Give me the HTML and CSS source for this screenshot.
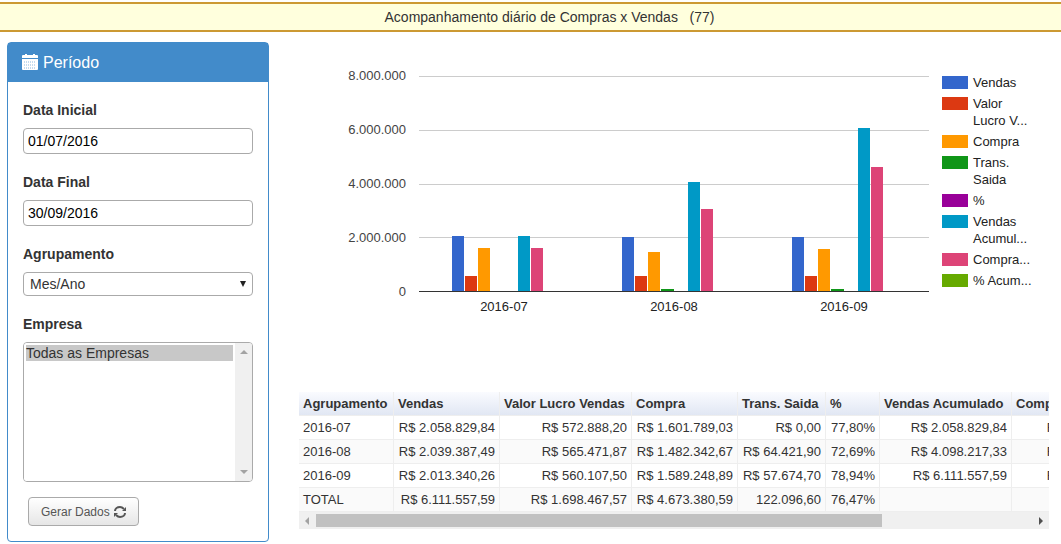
FILE: index.html
```html
<!DOCTYPE html>
<html lang="pt-br">
<head>
    <meta charset="UTF-8">
    <meta name="viewport" content="width=device-width, initial-scale=1.0">
    <title>Acompanhamento diário de Compras x Vendas</title>
    <link rel="stylesheet" href="styles.css">
</head>
<body>

<header class="titulo">Acompanhamento diário de Compras x Vendas &nbsp; (77)</header>

<div class="pagina">
    <form class="painel">
        <h3 class="painel-titulo">
            <svg class="icone-calendario" viewBox="0 0 16 16" width="16" height="16" fill="#fff">
                <path d="M3 0h2v1h6V0h2v1h2a1 1 0 0 1 1 1v2H0V2a1 1 0 0 1 1-1h2z"/>
                <path d="M0 5h16v10a1 1 0 0 1-1 1H1a1 1 0 0 1-1-1z"/>
                <path d="M2 8h12M2 11h12M2 14h12" fill="none" stroke="#8ab8e0" stroke-width="1" stroke-dasharray="1 1"/>
            </svg>
            Período
        </h3>
        <div class="painel-corpo">
            <div class="campo">
                <label for="dataInicial">Data Inicial</label>
                <input type="text" id="dataInicial" value="01/07/2016">
            </div>
            <div class="campo">
                <label for="dataFinal">Data Final</label>
                <input type="text" id="dataFinal" value="30/09/2016">
            </div>
            <div class="campo">
                <label for="agrupamento">Agrupamento</label>
                <div class="combo">
                    <select id="agrupamento">
                        <option selected>Mes/Ano</option>
                    </select>
                    <svg viewBox="0 0 6 6" width="6" height="6" fill="#222"><path d="M0 0h6L3 6z"/></svg>
                </div>
            </div>
            <div class="campo">
                <label for="empresa">Empresa</label>
                <div class="lista">
                    <select id="empresa" size="8" multiple>
                        <option selected>Todas as Empresas</option>
                    </select>
                    <div class="rolagem-v">
                        <svg viewBox="0 0 8 4" width="8" height="4" fill="#a3a3a3"><path d="M0 4h8L4 0z"/></svg>
                        <svg viewBox="0 0 8 4" width="8" height="4" fill="#a3a3a3"><path d="M0 0h8L4 4z"/></svg>
                    </div>
                </div>
            </div>
            <button type="button" class="btn">Gerar Dados
                <svg viewBox="0 0 12 12" width="12" height="12" fill="none" stroke="#555" stroke-width="2">
                    <path d="M1 5C1 3 3 1 6 1c2 0 3 1 4 2M11 7c0 2-2 4-5 4-2 0-3-1-4-2"/>
                    <path d="M12 1v4H8zM0 11V7h4z" fill="#555" stroke="none"/>
                </svg>
            </button>
        </div>
    </form>

    <main class="conteudo">
        <section class="grafico">
            <div class="eixo-y">
                <span>8.000.000</span>
                <span>6.000.000</span>
                <span>4.000.000</span>
                <span>2.000.000</span>
                <span>0</span>
            </div>
            <div class="area">
                <div class="linhas"><i></i><i></i><i></i><i></i><i></i></div>
                <div class="barras">
                    <div class="grupo">
                        <div class="barra vendas" style="height: 25.74%"></div>
                        <div class="barra lucro" style="height: 7.16%"></div>
                        <div class="barra compra" style="height: 20.02%"></div>
                        <div class="barra trans" style="height: 0%"></div>
                        <div class="barra perc" style="height: 0%"></div>
                        <div class="barra vendas-ac" style="height: 25.74%"></div>
                        <div class="barra compra-ac" style="height: 20.02%"></div>
                        <div class="barra perc-ac" style="height: 0%"></div>
                    </div>
                    <div class="grupo">
                        <div class="barra vendas" style="height: 25.49%"></div>
                        <div class="barra lucro" style="height: 7.07%"></div>
                        <div class="barra compra" style="height: 18.53%"></div>
                        <div class="barra trans" style="height: 0.81%"></div>
                        <div class="barra perc" style="height: 0%"></div>
                        <div class="barra vendas-ac" style="height: 51.23%"></div>
                        <div class="barra compra-ac" style="height: 38.55%"></div>
                        <div class="barra perc-ac" style="height: 0%"></div>
                    </div>
                    <div class="grupo">
                        <div class="barra vendas" style="height: 25.17%"></div>
                        <div class="barra lucro" style="height: 7%"></div>
                        <div class="barra compra" style="height: 19.87%"></div>
                        <div class="barra trans" style="height: 0.72%"></div>
                        <div class="barra perc" style="height: 0%"></div>
                        <div class="barra vendas-ac" style="height: 76.39%"></div>
                        <div class="barra compra-ac" style="height: 58.42%"></div>
                        <div class="barra perc-ac" style="height: 0%"></div>
                    </div>
                </div>
            </div>
            <ul class="legenda">
                <li><i class="vendas"></i><span>Vendas</span></li>
                <li><i class="lucro"></i><span>Valor<br>Lucro V...</span></li>
                <li><i class="compra"></i><span>Compra</span></li>
                <li><i class="trans"></i><span>Trans.<br>Saida</span></li>
                <li><i class="perc"></i><span>%</span></li>
                <li><i class="vendas-ac"></i><span>Vendas<br>Acumul...</span></li>
                <li><i class="compra-ac"></i><span>Compra...</span></li>
                <li><i class="perc-ac"></i><span>% Acum...</span></li>
            </ul>
            <div class="eixo-x">
                <span>2016-07</span>
                <span>2016-08</span>
                <span>2016-09</span>
            </div>
        </section>

        <section class="dados">
            <div class="tabela-janela">
                <table>
                    <colgroup>
                        <col class="c-agrupamento">
                        <col class="c-valor">
                        <col class="c-largo">
                        <col class="c-valor">
                        <col class="c-trans">
                        <col class="c-perc">
                        <col class="c-largo">
                        <col class="c-compra-ac">
                        <col class="c-perc-ac">
                    </colgroup>
                    <thead>
                        <tr>
                            <th>Agrupamento</th>
                            <th>Vendas</th>
                            <th>Valor Lucro Vendas</th>
                            <th>Compra</th>
                            <th>Trans. Saida</th>
                            <th>%</th>
                            <th>Vendas Acumulado</th>
                            <th>Compra Acumulado</th>
                            <th>% Acumulado</th>
                        </tr>
                    </thead>
                    <tbody>
                        <tr>
                            <td>2016-07</td>
                            <td>R$ 2.058.829,84</td>
                            <td>R$ 572.888,20</td>
                            <td>R$ 1.601.789,03</td>
                            <td>R$ 0,00</td>
                            <td>77,80%</td>
                            <td>R$ 2.058.829,84</td>
                            <td>R$ 1.601.789,03</td>
                            <td>77,80%</td>
                        </tr>
                        <tr>
                            <td>2016-08</td>
                            <td>R$ 2.039.387,49</td>
                            <td>R$ 565.471,87</td>
                            <td>R$ 1.482.342,67</td>
                            <td>R$ 64.421,90</td>
                            <td>72,69%</td>
                            <td>R$ 4.098.217,33</td>
                            <td>R$ 3.084.131,70</td>
                            <td>75,25%</td>
                        </tr>
                        <tr>
                            <td>2016-09</td>
                            <td>R$ 2.013.340,26</td>
                            <td>R$ 560.107,50</td>
                            <td>R$ 1.589.248,89</td>
                            <td>R$ 57.674,70</td>
                            <td>78,94%</td>
                            <td>R$ 6.111.557,59</td>
                            <td>R$ 4.673.380,59</td>
                            <td>76,47%</td>
                        </tr>
                        <tr>
                            <td>TOTAL</td>
                            <td>R$ 6.111.557,59</td>
                            <td>R$ 1.698.467,57</td>
                            <td>R$ 4.673.380,59</td>
                            <td>122.096,60</td>
                            <td>76,47%</td>
                            <td></td>
                            <td></td>
                            <td></td>
                        </tr>
                    </tbody>
                </table>
            </div>
            <div class="rolagem-h">
                <svg viewBox="0 0 4 8" width="4" height="8" fill="#a3a3a3"><path d="M4 0v8L0 4z"/></svg>
                <div class="trilho"><div class="polegar"></div></div>
                <svg viewBox="0 0 4 8" width="4" height="8" fill="#505050"><path d="M0 0v8l4-4z"/></svg>
            </div>
        </section>
    </main>
</div>

</body>
</html>
```
FILE: styles.css
```css
* {
    box-sizing: border-box;
}
body {
    margin: 0;
    font-family: "Liberation Sans", Arial, sans-serif;
    font-size: 14px;
    line-height: 20px;
    color: #333;
    background: #fff;
}
.titulo {
    margin-top: 2px;
    padding: 3px 0 3px 38px;
    text-align: center;
    background: #ffffdd;
    border-top: 2px solid #cc9933;
    border-bottom: 2px solid #cc9933;
}
.pagina {
    display: flex;
    align-items: flex-start;
    gap: 30px;
    padding: 10px 12px 0 7px;
}

/* painel de filtros */
.painel {
    flex: 0 0 262px;
    border: 1px solid #428bca;
    border-radius: 4px;
}
.painel-titulo {
    display: flex;
    align-items: center;
    gap: 5px;
    margin: 0;
    padding: 10px 14px 9px;
    font-size: 16px;
    font-weight: normal;
    color: #fff;
    background: #428bca;
}
.icone-calendario {
    margin-bottom: 2px;
}
.painel-corpo {
    display: flex;
    flex-direction: column;
    gap: 18px;
    padding: 18px 15px 15px;
}
.campo {
    display: flex;
    flex-direction: column;
    gap: 8px;
}
.campo label {
    font-weight: bold;
}
.campo input {
    width: 100%;
    height: 26px;
    padding: 0 4px;
    font: inherit;
    color: #000;
    border: 1px solid #aaa;
    border-radius: 4px;
}
.combo {
    display: grid;
    align-items: center;
}
.combo select {
    grid-area: 1 / 1;
    height: 24px;
    padding: 0 6px;
    font: inherit;
    color: #333;
    background: #fff;
    border: 1px solid #aaa;
    border-radius: 4px;
    appearance: none;
}
.combo svg {
    grid-area: 1 / 1;
    justify-self: end;
    margin-right: 7px;
    pointer-events: none;
}
.lista {
    display: flex;
    height: 140px;
    border: 1px solid #aaa;
    border-radius: 4px;
    overflow: hidden;
}
.lista select {
    flex: 1;
    min-width: 0;
    height: 100%;
    padding: 2px;
    font: inherit;
    color: #333;
    background: #fff;
    border: none;
    outline: none;
    overflow: hidden;
}
.lista option {
    min-height: 16px;
    padding: 0;
    line-height: 16px;
}
.lista option:checked {
    color: #333;
    background: #c8c8c8;
}
.rolagem-v {
    display: flex;
    flex-direction: column;
    justify-content: space-between;
    align-items: center;
    width: 17px;
    padding: 7px 0;
    background: #f0f0f0;
}
.btn {
    display: flex;
    align-items: center;
    align-self: flex-start;
    gap: 4px;
    height: 29px;
    margin: -3px 0 0 5px;
    padding: 0 12px;
    font: inherit;
    font-size: 12px;
    color: #555;
    background: linear-gradient(#fff, #e6e6e6);
    border: 1px solid #aaa;
    border-radius: 4px;
}

/* grafico */
.conteudo {
    flex: 1;
    min-width: 0;
    padding-top: 34px;
}
.grafico {
    display: grid;
    grid-template-columns: 107px 1fr 107px;
    grid-template-rows: 216px 100px;
    column-gap: 13px;
    font-size: 13px;
    line-height: 16px;
    color: #222;
}
.eixo-y {
    display: flex;
    flex-direction: column;
    justify-content: space-between;
    margin: -8px 0;
    text-align: right;
    color: #444;
}
.area {
    display: grid;
}
.linhas {
    grid-area: 1 / 1;
    display: flex;
    flex-direction: column;
    justify-content: space-between;
}
.linhas i {
    height: 1px;
    background: #ccc;
}
.barras {
    grid-area: 1 / 1;
    display: flex;
    margin-top: 2px;
    border-bottom: 1px solid #333;
}
.grupo {
    flex: 1;
    display: flex;
    align-items: flex-end;
    gap: 1px;
    padding: 0 33px;
}
.barra {
    flex: 1;
}
.vendas { background: #3366cc; }
.lucro { background: #dc3912; }
.compra { background: #ff9900; }
.trans { background: #109618; }
.perc { background: #990099; }
.vendas-ac { background: #0099c6; }
.compra-ac { background: #dd4477; }
.perc-ac { background: #66aa00; }
.legenda {
    display: flex;
    flex-direction: column;
    gap: 4px;
    margin: -2px 0 0;
    padding: 0;
    list-style: none;
    line-height: 17px;
}
.legenda li {
    display: flex;
    gap: 5px;
}
.legenda i {
    width: 26px;
    height: 13px;
    margin-top: 2px;
}
.eixo-x {
    grid-column: 2;
    display: flex;
    padding-top: 7px;
}
.eixo-x span {
    flex: 1;
    text-align: center;
}

/* tabela */
.tabela-janela {
    overflow: hidden;
}
table {
    width: 947px;
    table-layout: fixed;
    border-collapse: separate;
    border-spacing: 0;
    font-size: 13px;
    line-height: 16px;
    white-space: nowrap;
}
.c-agrupamento { width: 95px; }
.c-valor { width: 106px; }
.c-largo { width: 132px; }
.c-trans { width: 88px; }
.c-perc { width: 54px; }
.c-compra-ac { width: 136px; }
.c-perc-ac { width: 98px; }
th,
td {
    height: 24px;
    padding: 0 4px;
    border-right: 1px solid #eee;
    border-bottom: 1px solid #eee;
}
th {
    text-align: left;
    background: linear-gradient(#fafbff, #e1e7f3);
}
td {
    text-align: right;
}
td:first-child {
    text-align: left;
}
tbody tr:nth-child(even) {
    background: #fafafa;
}
.rolagem-h {
    display: flex;
    align-items: center;
    gap: 7px;
    height: 17px;
    padding: 0 6px;
    background: #f0f0f0;
}
.trilho {
    flex: 1;
}
.polegar {
    width: 79%;
    height: 13px;
    background: #c1c1c1;
}
```
